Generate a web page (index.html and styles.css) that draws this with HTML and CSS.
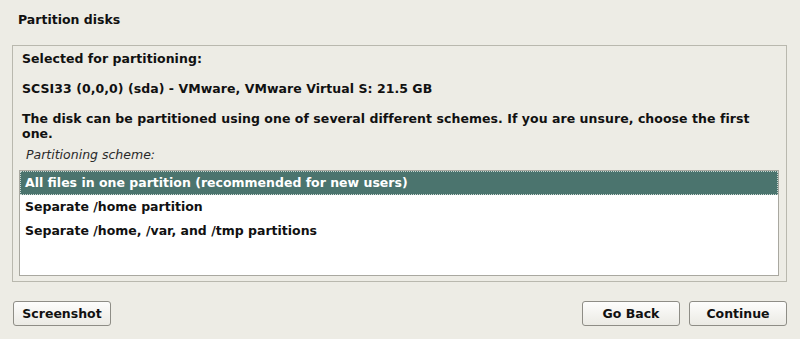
FILE: index.html
```html
<!DOCTYPE html>
<html>
<head>
<meta charset="utf-8">
<link rel="stylesheet" href="styles.css">
</head>
<body>
<div class="page">
  <h1 class="title">Partition disks</h1>
  <div class="frame">
    <p class="para">Selected for partitioning:</p>
    <p class="para">SCSI33 (0,0,0) (sda) - VMware, VMware Virtual S: 21.5 GB</p>
    <p class="para wrap">The disk can be partitioned using one of several different schemes. If you are unsure, choose the first one.</p>
    <p class="label">Partitioning scheme:</p>
    <ul class="list">
      <li class="row selected">All files in one partition (recommended for new users)</li>
      <li class="row">Separate /home partition</li>
      <li class="row">Separate /home, /var, and /tmp partitions</li>
    </ul>
  </div>
  <div class="buttons">
    <button class="btn">Screenshot</button>
    <div class="spacer"></div>
    <button class="btn">Go Back</button>
    <button class="btn">Continue</button>
  </div>
</div>
</body>
</html>
```
FILE: styles.css
```css
html, body {
  margin: 0;
  padding: 0;
  background: #edece5;
}
body {
  font-family: "DejaVu Sans", "Liberation Sans", sans-serif;
  font-size: 12.5px;
  font-weight: bold;
  color: #111;
  width: 800px;
  height: 339px;
  overflow: hidden;
}
.page {
  display: flex;
  flex-direction: column;
}
.title {
  font-size: 12.5px;
  font-weight: bold;
  margin: 0;
  padding: 12px 0 0 18px;
  line-height: 15px;
  height: 33px;
  box-sizing: border-box;
}
.frame {
  margin: 12px 13px 0 12px;
  border: 1px solid #b9b8ae;
  height: 237px;
  box-sizing: border-box;
  padding: 5px 7px 0 6px;
  display: flex;
  flex-direction: column;
}
.para {
  margin: 0 0 15px 0;
  padding-left: 3px;
  line-height: 15px;
  letter-spacing: 0.05px;
}
.para.wrap {
  margin-bottom: 6px;
  padding-right: 24px;
}
.label {
  margin: 0 0 8px 0;
  padding-left: 7px;
  font-weight: normal;
  font-style: italic;
  line-height: 15px;
  color: #2a2a2a;
}
.list {
  list-style: none;
  margin: 0;
  padding: 0;
  background: #fff;
  border: 1px solid #a9a8a0;
  height: 106px;
  box-sizing: border-box;
}
.row {
  height: 24px;
  line-height: 24px;
  padding-left: 5px;
  box-sizing: border-box;
}
.row.selected {
  background: #4b746e;
  color: #fff;
  border: 1px dotted #c9d6d2;
  line-height: 22px;
  padding-left: 4px;
}
.buttons {
  display: flex;
  margin: 19px 13px 0 13px;
  gap: 9px;
}
.spacer {
  flex: 1;
}
.btn {
  width: 98px;
  height: 25px;
  font-family: "DejaVu Sans", "Liberation Sans", sans-serif;
  font-size: 12.5px;
  font-weight: bold;
  color: #111;
  border: 1px solid #8e8d86;
  border-radius: 3px;
  background: linear-gradient(#fdfdfc, #ebeae4);
  padding: 0;
}
```
